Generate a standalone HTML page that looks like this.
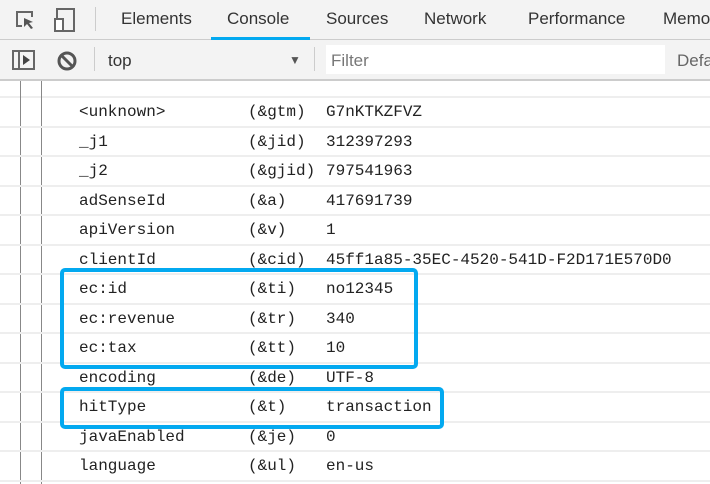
<!DOCTYPE html>
<html><head><style>
body{margin:0;width:710px;height:484px;overflow:hidden;background:#fff;font-family:"Liberation Sans",sans-serif;position:relative}
.tabs{position:absolute;left:0;top:0;width:710px;height:39px;background:#f3f3f3;border-bottom:1px solid #ccc}
.tab{position:absolute;top:9px;font-size:17px;color:#333}
.tb{position:absolute;left:0;top:40px;width:710px;height:39px;background:#f3f3f3;border-bottom:2px solid #ccc}
.row{position:absolute;left:0;width:710px;height:29.5px;border-bottom:2px solid #eee;box-sizing:border-box}
.t{position:absolute;font-family:"Liberation Mono",monospace;font-size:16px;color:#222;white-space:pre}
.vl{position:absolute;top:81px;width:1px;height:403px;background:#888}
.box{position:absolute;border:4px solid #03a9f0;border-radius:5px;box-sizing:border-box}
</style></head><body>
<div class="tabs">
<svg style="position:absolute;left:14px;top:9px" width="24" height="22"><path d="M9 3H3v14h5" fill="none" stroke="#666" stroke-width="2"/><path d="M9 3h9v5" fill="none" stroke="#666" stroke-width="2"/><path d="M10 9l9 4-4 1 4 5-2 1-4-5-3 3z" fill="#555"/></svg>
<svg style="position:absolute;left:52px;top:7px" width="26" height="26"><rect x="5" y="2" width="17" height="22" fill="none" stroke="#666" stroke-width="2"/><rect x="3" y="12" width="8" height="12" fill="#fff" stroke="#666" stroke-width="2"/></svg>
<div style="position:absolute;left:95px;top:7px;width:1px;height:24px;background:#ccc"></div>
<div class="tab" style="left:121px">Elements</div>
<div class="tab" style="left:227px">Console</div>
<div style="position:absolute;left:211px;top:37px;width:99px;height:3px;background:#03a9f0"></div>
<div class="tab" style="left:326px">Sources</div>
<div class="tab" style="left:424px">Network</div>
<div class="tab" style="left:528px">Performance</div>
<div class="tab" style="left:663px">Memo</div>
</div>
<div class="tb">
<svg style="position:absolute;left:12px;top:10px" width="24" height="22"><rect x="1" y="1" width="21" height="18" fill="none" stroke="#666" stroke-width="2"/><line x1="7" y1="1" x2="7" y2="19" stroke="#666" stroke-width="2"/><path d="M11 5l7 5-7 5z" fill="#444"/></svg>
<svg style="position:absolute;left:56px;top:10px" width="22" height="22"><circle cx="11" cy="11" r="8" fill="none" stroke="#555" stroke-width="3"/><line x1="5" y1="5" x2="17" y2="17" stroke="#555" stroke-width="3"/></svg>
<div style="position:absolute;left:94px;top:7px;width:1px;height:24px;background:#ccc"></div>
<div style="position:absolute;left:108px;top:11px;font-size:17px;color:#333">top</div>
<div style="position:absolute;left:289px;top:13px;font-size:12px;color:#555">▼</div>
<div style="position:absolute;left:314px;top:7px;width:1px;height:24px;background:#ccc"></div>
<div style="position:absolute;left:326px;top:5px;width:339px;height:29px;background:#fff"></div>
<div style="position:absolute;left:331px;top:11px;font-size:17px;color:#777">Filter</div>
<div style="position:absolute;left:677px;top:11px;font-size:17px;color:#666">Defa</div>
</div>
<div class="row" style="top:81px;height:17px"></div>
<div class="vl" style="left:20px"></div><div class="vl" style="left:41px"></div>
<div id="rows"></div>
<div class="row" style="top:98px"><span class="t" style="left:79px;top:5px">&lt;unknown&gt;</span><span class="t" style="left:248px;top:5px">(&amp;gtm)</span><span class="t" style="left:326px;top:5px">G7nKTKZFVZ</span></div>
<div class="row" style="top:127.5px"><span class="t" style="left:79px;top:5px">_j1</span><span class="t" style="left:248px;top:5px">(&amp;jid)</span><span class="t" style="left:326px;top:5px">312397293</span></div>
<div class="row" style="top:157px"><span class="t" style="left:79px;top:5px">_j2</span><span class="t" style="left:248px;top:5px">(&amp;gjid)</span><span class="t" style="left:326px;top:5px">797541963</span></div>
<div class="row" style="top:186.5px"><span class="t" style="left:79px;top:5px">adSenseId</span><span class="t" style="left:248px;top:5px">(&amp;a)</span><span class="t" style="left:326px;top:5px">417691739</span></div>
<div class="row" style="top:216px"><span class="t" style="left:79px;top:5px">apiVersion</span><span class="t" style="left:248px;top:5px">(&amp;v)</span><span class="t" style="left:326px;top:5px">1</span></div>
<div class="row" style="top:245.5px"><span class="t" style="left:79px;top:5px">clientId</span><span class="t" style="left:248px;top:5px">(&amp;cid)</span><span class="t" style="left:326px;top:5px">45ff1a85-35EC-4520-541D-F2D171E570D0</span></div>
<div class="row" style="top:275px"><span class="t" style="left:79px;top:5px">ec:id</span><span class="t" style="left:248px;top:5px">(&amp;ti)</span><span class="t" style="left:326px;top:5px">no12345</span></div>
<div class="row" style="top:304.5px"><span class="t" style="left:79px;top:5px">ec:revenue</span><span class="t" style="left:248px;top:5px">(&amp;tr)</span><span class="t" style="left:326px;top:5px">340</span></div>
<div class="row" style="top:334px"><span class="t" style="left:79px;top:5px">ec:tax</span><span class="t" style="left:248px;top:5px">(&amp;tt)</span><span class="t" style="left:326px;top:5px">10</span></div>
<div class="row" style="top:363.5px"><span class="t" style="left:79px;top:5px">encoding</span><span class="t" style="left:248px;top:5px">(&amp;de)</span><span class="t" style="left:326px;top:5px">UTF-8</span></div>
<div class="row" style="top:393px"><span class="t" style="left:79px;top:5px">hitType</span><span class="t" style="left:248px;top:5px">(&amp;t)</span><span class="t" style="left:326px;top:5px">transaction</span></div>
<div class="row" style="top:422.5px"><span class="t" style="left:79px;top:5px">javaEnabled</span><span class="t" style="left:248px;top:5px">(&amp;je)</span><span class="t" style="left:326px;top:5px">0</span></div>
<div class="row" style="top:452px"><span class="t" style="left:79px;top:5px">language</span><span class="t" style="left:248px;top:5px">(&amp;ul)</span><span class="t" style="left:326px;top:5px">en-us</span></div>
<div class="box" style="left:60px;top:268px;width:358px;height:101px"></div>
<div class="box" style="left:60px;top:387px;width:384px;height:42px"></div>
</body></html>
